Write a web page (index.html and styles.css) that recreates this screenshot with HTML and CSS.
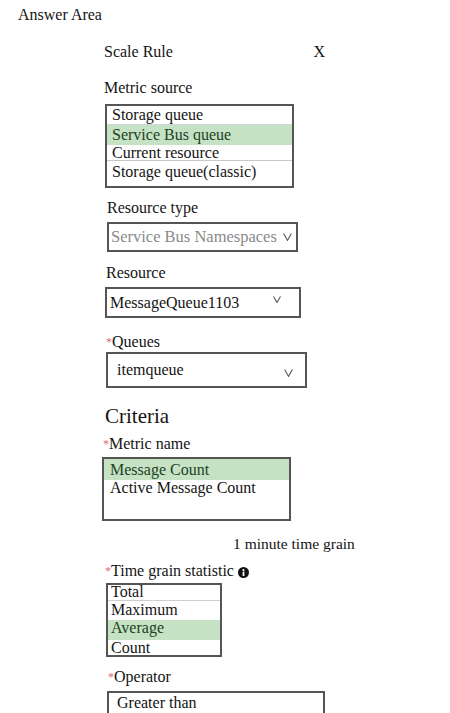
FILE: index.html
```html
<!DOCTYPE html>
<html>
<head>
<meta charset="utf-8">
<link rel="stylesheet" href="styles.css">
</head>
<body>
<div class="answer">Answer Area</div>
<div class="panel">
  <div class="header"><span>Scale Rule</span><span class="close">X</span></div>

  <div class="label l-source">Metric source</div>
  <div class="listbox lb-source">
    <div class="opt">Storage queue</div>
    <div class="opt sel">Service Bus queue</div>
    <div class="opt">Current resource</div>
    <div class="opt">Storage queue(classic)</div>
  </div>

  <div class="label l-rtype">Resource type</div>
  <div class="select s-rtype">
    <span class="val">Service Bus Namespaces</span>
    <svg class="chev" width="9" height="8" viewBox="0 0 9 8"><polyline points="0.6,0.5 4.5,7.4 8.4,0.5" fill="none" stroke="#555" stroke-width="1.1"/></svg>
  </div>

  <div class="label l-res">Resource</div>
  <div class="select s-res">
    <span class="val">MessageQueue1103</span>
    <svg class="chev" width="8" height="7" viewBox="0 0 8 7"><polyline points="0.5,0.5 4,6.5 7.5,0.5" fill="none" stroke="#555" stroke-width="1.1"/></svg>
  </div>

  <div class="label l-queues"><span class="req">*</span>Queues</div>
  <div class="select s-queues">
    <span class="val">itemqueue</span>
    <svg class="chev" width="9" height="8" viewBox="0 0 9 8"><polyline points="0.6,0.5 4.5,7.4 8.4,0.5" fill="none" stroke="#555" stroke-width="1.1"/></svg>
  </div>

  <div class="criteria">Criteria</div>
  <div class="label l-metric"><span class="req">*</span>Metric name</div>
  <div class="listbox lb-metric">
    <div class="opt sel">Message Count</div>
    <div class="opt">Active Message Count</div>
  </div>

  <div class="label l-grain">1 minute time grain</div>

  <div class="label l-stat"><span class="req">*</span>Time grain statistic<svg class="info" width="11" height="11" viewBox="0 0 11 11"><circle cx="5.5" cy="5.5" r="5.5" fill="#111"/><circle cx="5.5" cy="3" r="1.1" fill="#fff"/><rect x="4.6" y="4.6" width="1.8" height="4.4" fill="#fff"/></svg></div>
  <div class="listbox lb-stat">
    <div class="opt">Total</div>
    <div class="opt">Maximum</div>
    <div class="opt sel">Average</div>
    <div class="opt">Count</div>
  </div>

  <div class="label l-op"><span class="req">*</span>Operator</div>
  <div class="select s-op">
    <span class="val">Greater than</span>
  </div>
</div>
</body>
</html>
```

FILE: styles.css
```css
html, body {
  margin: 0;
  padding: 0;
  background: #ffffff;
}
body {
  font-family: "Liberation Serif", "Times New Roman", serif;
  font-size: 16px;
  line-height: 18px;
  color: #141414;
  overflow: hidden;
  height: 713px;
}
.answer {
  padding: 6px 0 0 18px;
  height: 18px;
}
.panel {
  padding-left: 102px;
}
.header {
  margin-top: 19px;
  margin-left: 2px;
  width: 221px;
  display: flex;
  justify-content: space-between;
}
.label {
  height: 18px;
  white-space: nowrap;
}
.req {
  color: #e06a78;
  font-size: 12px;
  vertical-align: 1px;
}
.l-source { margin-top: 18px; margin-left: 2px; }
.l-rtype  { margin-top: 11px; margin-left: 5px; }
.l-res    { margin-top: 12px; margin-left: 4px; }
.l-queues { margin-top: 15px; margin-left: 4px; }
.l-metric { margin-top: 7px; margin-left: 1px; }
.l-grain  { margin-top: 14px; margin-left: 131px; font-size: 15.5px; }
.l-stat   { margin-top: 9px; margin-left: 3px; }
.l-op     { margin-top: 11px; margin-left: 6px; }

.criteria {
  margin-top: 16px;
  margin-left: 3px;
  font-size: 21px;
  line-height: 24px;
  height: 24px;
}

/* list boxes */
.listbox {
  box-sizing: border-box;
  border: 2px solid #555;
  background: #fff;
}
.opt {
  white-space: nowrap;
  color: #141414;
}
.opt.sel {
  background: #c5e2c5;
  color: #23401f;
}

.lb-source {
  margin-top: 7px;
  margin-left: 3px;
  width: 189px;
}
.lb-source .opt { padding-left: 5px; }
.lb-source .opt:nth-child(1) { height: 18px; line-height: 18px; border-bottom: 1px solid #d6d6d6; }
.lb-source .opt:nth-child(2) { height: 20px; line-height: 19px; }
.lb-source .opt:nth-child(3) { height: 15px; line-height: 15px; border-bottom: 1px solid #c8c8c8; }
.lb-source .opt:nth-child(4) { height: 23px; line-height: 18px; padding-top: 2px; }

.lb-metric {
  margin-top: 4px;
  width: 189px;
  height: 64px;
}
.lb-metric .opt { padding-left: 6px; }
.lb-metric .opt:nth-child(1) { height: 21px; line-height: 21px; }
.lb-metric .opt:nth-child(2) { height: 18px; line-height: 16px; }

.lb-stat {
  margin-top: 3px;
  margin-left: 4px;
  width: 116px;
}
.lb-stat .opt { padding-left: 3px; }
.lb-stat .opt:nth-child(1) { height: 15px; line-height: 14px; border-bottom: 1px solid #cfcfcf; }
.lb-stat .opt:nth-child(2) { height: 19px; line-height: 18px; }
.lb-stat .opt:nth-child(3) { height: 20px; line-height: 16px; }
.lb-stat .opt:nth-child(4) { height: 15px; line-height: 15px; }

/* selects */
.select {
  box-sizing: border-box;
  border: 2px solid #555;
  display: flex;
  align-items: center;
  white-space: nowrap;
  background: #fff;
}
.select .val {
  flex: 1;
}
.chev {
  display: block;
  flex: none;
}
.s-rtype {
  margin-top: 5px;
  margin-left: 5px;
  width: 191px;
  height: 30px;
  padding-left: 2px;
  padding-right: 4px;
}
.s-rtype .val {
  font-size: 16.5px;
  line-height: 26px;
  color: #8a8a8a;
}
.s-res {
  margin-top: 5px;
  margin-left: 3px;
  width: 196px;
  height: 31px;
  padding-left: 3px;
  padding-right: 18px;
}
.s-res .val { line-height: 27px; }
.s-res .chev { margin-bottom: 6px; }
.s-queues {
  margin-top: 1px;
  margin-left: 4px;
  width: 201px;
  height: 36px;
  padding-left: 9px;
  padding-right: 12px;
}
.s-queues .val { line-height: 32px; }
.s-queues .chev { margin-top: 5px; }
.s-op {
  margin-top: 5px;
  margin-left: 5px;
  width: 218px;
  height: 40px;
  padding-left: 8px;
  align-items: flex-start;
}
.s-op .val { line-height: 18px; padding-top: 1px; }

.info {
  margin-left: 4px;
  vertical-align: -2px;
}
```
